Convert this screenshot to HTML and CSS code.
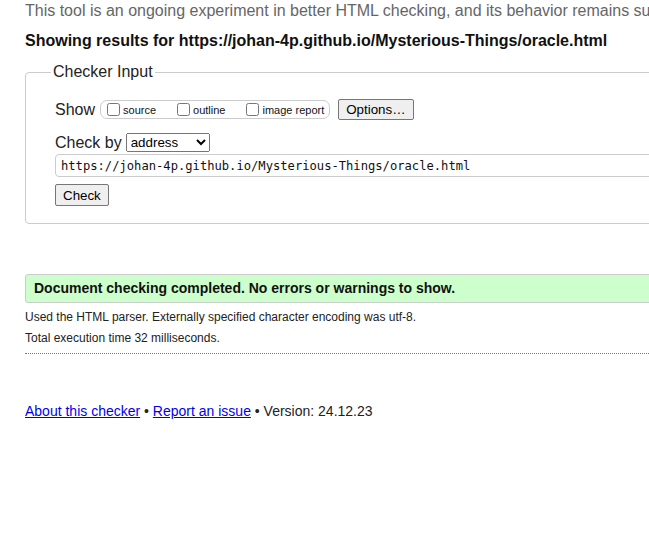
FILE: index.html
```html
<!DOCTYPE html>
<html lang="en">
<head>
<meta charset="utf-8">
<title>Showing results for https://johan-4p.github.io/Mysterious-Things/oracle.html - Nu Html Checker</title>
<link rel="stylesheet" href="styles.css">
</head>
<body>
<div class="page">
  <p class="intro">This tool is an ongoing experiment in better HTML checking, and its behavior remains subject to change</p>
  <h2 class="heading">Showing results for https://johan-4p.github.io/Mysterious-Things/oracle.html</h2>
  <form class="checker">
    <fieldset class="inputs">
      <legend class="legend">Checker Input</legend>
      <div class="row show-row">
        <span class="label">Show</span>
        <div class="show-box">
          <label class="opt"><input type="checkbox" class="cb">source</label>
          <label class="opt"><input type="checkbox" class="cb">outline</label>
          <label class="opt"><input type="checkbox" class="cb">image report</label>
        </div>
        <button type="button" class="btn options">Options…</button>
      </div>
      <div class="row checkby-row">
        <span class="label">Check by</span>
        <select class="select">
          <option>address</option>
          <option>file upload</option>
          <option>text input</option>
        </select>
      </div>
      <input type="text" class="url" value="https://johan-4p.github.io/Mysterious-Things/oracle.html">
      <div class="row submit-row">
        <button type="button" class="btn check">Check</button>
      </div>
    </fieldset>
  </form>
  <div class="success">Document checking completed. No errors or warnings to show.</div>
  <p class="details">Used the HTML parser. Externally specified character encoding was utf-8.</p>
  <p class="details">Total execution time 32 milliseconds.</p>
  <hr class="sep">
  <p class="footer"><a href="#" class="link">About this checker</a> • <a href="#" class="link">Report an issue</a> • Version: 24.12.23</p>
</div>
</body>
</html>
```
FILE: styles.css
```css
html {
  overflow: hidden;
  background: #fff;
}
body {
  margin: 0;
  padding: 0 0 0 25px;
  font-family: "Liberation Sans", Arial, sans-serif;
  color: #000;
}
.page {
  width: 680px;
}
.intro {
  margin: 2px 0 0;
  font-size: 16px;
  line-height: 18px;
  color: #666;
  white-space: nowrap;
}
.heading {
  margin: 12px 0 0;
  font-size: 16px;
  line-height: 18px;
  font-weight: bold;
  color: #111;
  white-space: nowrap;
}
.checker {
  margin: 13px 0 0;
}
.inputs {
  margin: 0;
  padding: 18px 0 17px 25px;
  border: 1px solid #ccc;
  border-radius: 4px;
}
.legend {
  padding: 0 2px;
  font-size: 16px;
  line-height: 18px;
  color: #222;
}
.row {
  display: flex;
  align-items: center;
  padding-left: 4px;
}
.label {
  font-size: 16px;
  line-height: 18px;
  color: #222;
}
.show-row {
  height: 21px;
}
.show-box {
  display: flex;
  align-items: center;
  gap: 17px;
  margin-left: 5px;
  height: 17px;
  padding: 0 5px 0 2px;
  border: 1px solid #ccc;
  border-radius: 7px;
}
.opt {
  display: flex;
  align-items: center;
  font-size: 11px;
  color: #111;
}
.cb {
  margin: 0 3px 0 4px;
  width: 13px;
  height: 13px;
}
.btn {
  font-family: "Liberation Sans", Arial, sans-serif;
  font-size: 13.33px;
  color: #000;
  background: #efefef;
  border: 1px solid #767676;
  border-radius: 2px;
}
.options {
  margin-left: 8px;
  height: 21px;
  padding: 0 7px;
}
.checkby-row {
  margin-top: 13px;
  height: 19px;
}
.select {
  margin-left: 4px;
  width: 84px;
  height: 19px;
  font-family: "Liberation Sans", Arial, sans-serif;
  font-size: 13.33px;
}
.url {
  display: block;
  box-sizing: border-box;
  margin: 2px 0 0 4px;
  width: 640px;
  height: 23px;
  padding: 0 5px;
  font-family: "DejaVu Sans Mono", "Liberation Mono", monospace;
  font-size: 12.15px;
  color: #111;
  border: 1px solid #ccc;
  border-radius: 4px;
  outline: none;
}
.submit-row {
  margin-top: 7px;
}
.check {
  height: 22px;
  padding: 0 7px;
}
.success {
  margin: 50px 0 0;
  padding: 5px 8px;
  font-size: 14px;
  line-height: 17px;
  font-weight: bold;
  color: #111;
  background: #ccffcc;
  border: 1px solid #ccc;
  border-radius: 3px;
}
.details {
  margin: 7px 0 0;
  font-size: 12px;
  line-height: 15px;
  color: #222;
}
.details + .details {
  margin-top: 6px;
}
.sep {
  margin: 7px 0 0;
  border: 0;
  border-top: 1px dotted #777;
  height: 0;
}
.footer {
  margin: 49px 0 0;
  font-size: 14px;
  line-height: 17px;
  color: #222;
}
.link {
  color: #0000ee;
}
```
